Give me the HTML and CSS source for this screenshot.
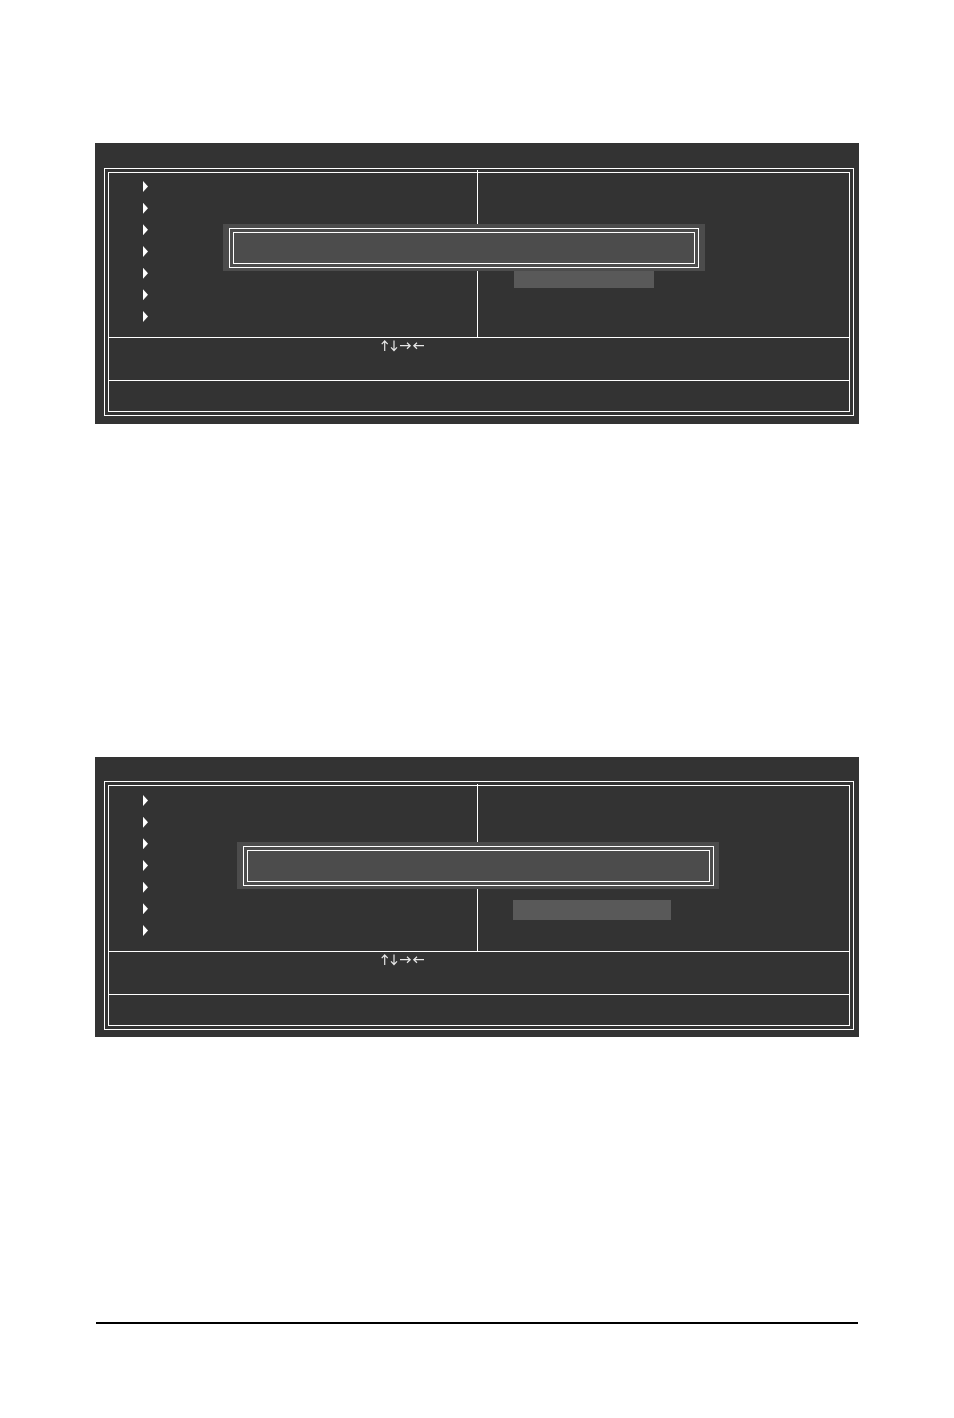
FILE: index.html
```html
<!DOCTYPE html>
<html lang="en">

<head>
    <meta charset="UTF-8">
    <meta name="viewport" content="width=device-width, initial-scale=1.0">
    <title>Setup Utility</title>
    <link rel="stylesheet" href="styles.css">
</head>

<body>
    <main class="page">
        <section class="screen">
            <div class="frame">
                <div class="innerFrame">
                    <div class="menus">
                        <ul class="submenus">
                            <li></li>
                            <li></li>
                            <li></li>
                            <li></li>
                            <li></li>
                            <li></li>
                            <li></li>
                        </ul>
                        <div class="options">
                            <div class="selected"></div>
                        </div>
                    </div>
                    <div class="keys">
                        <svg width="44" height="12" viewBox="0 0 44 12" role="img" aria-label="Arrow keys">
                            <path d="M3.7 11V1M0.7 4.2l3-3.2 3 3.2" />
                            <path d="M13 0.5v10M10 7.3l3 3.2 3-3.2" />
                            <path d="M19 5.7h10M26 2.7l3.2 3-3.2 3" />
                            <path d="M43 5.7H33M36 2.7l-3.2 3 3.2 3" />
                        </svg>
                    </div>
                    <div class="help"></div>
                </div>
            </div>
            <div class="dialog">
                <div class="frame">
                    <div class="innerFrame message"></div>
                </div>
            </div>
        </section>

        <section class="screen save">
            <div class="frame">
                <div class="innerFrame">
                    <div class="menus">
                        <ul class="submenus">
                            <li></li>
                            <li></li>
                            <li></li>
                            <li></li>
                            <li></li>
                            <li></li>
                            <li></li>
                        </ul>
                        <div class="options">
                            <div class="selected"></div>
                        </div>
                    </div>
                    <div class="keys">
                        <svg width="44" height="12" viewBox="0 0 44 12" role="img" aria-label="Arrow keys">
                            <path d="M3.7 11V1M0.7 4.2l3-3.2 3 3.2" />
                            <path d="M13 0.5v10M10 7.3l3 3.2 3-3.2" />
                            <path d="M19 5.7h10M26 2.7l3.2 3-3.2 3" />
                            <path d="M43 5.7H33M36 2.7l-3.2 3 3.2 3" />
                        </svg>
                    </div>
                    <div class="help"></div>
                </div>
            </div>
            <div class="dialog">
                <div class="frame">
                    <div class="innerFrame message"></div>
                </div>
            </div>
        </section>

        <hr class="footer-line">
    </main>
</body>

</html>
```
FILE: styles.css
```css
* {
    box-sizing: border-box;
}

body {
    margin: 0;
    background: #fff;
    font-family: "Liberation Sans", Arial, sans-serif;
}

.page {
    padding: 143px 95px 94px;
}

.screen {
    position: relative;
    padding: 25px 5px 8px 9px;
    background: #333;
    color: #fff;
}

/* double line */
.frame {
    border: 1px solid #fff;
    padding: 3px;
}

.innerFrame {
    border: 1px solid #fff;
}

.menus {
    display: grid;
    grid-template-columns: 92fr 93fr;
    height: 164px;
}

.submenus {
    display: flex;
    flex-direction: column;
    justify-content: space-between;
    margin: 0;
    padding: 8px 0 15px 34px;
    list-style: none;
}

.submenus li {
    width: 5px;
    height: 11px;
    background: #fff;
    clip-path: polygon(0 0, 100% 50%, 0 100%);
}

.options {
    margin-top: -3px;
    padding: 98px 0 0 36px;
    border-left: 1px solid #fff;
}

.selected {
    width: 140px;
    height: 20px;
    background: #595959;
}

.keys {
    height: 43px;
    padding: 2px 0 0 272px;
    border-top: 1px solid #fff;
}

.keys svg {
    display: block;
    fill: none;
    stroke: #e6e6e6;
    stroke-width: 1.2;
}

.help {
    height: 31px;
    border-top: 1px solid #fff;
}

.dialog {
    position: absolute;
    top: 81px;
    left: 128px;
    right: 154px;
    padding: 4px 6px 3px;
    background: #4c4c4c;
}

.message {
    height: 32px;
}

.save {
    margin-top: 333px;
    padding-top: 24px;
    padding-bottom: 7px;
}

.save .menus {
    height: 165px;
}

.save .submenus {
    padding-top: 9px;
}

.save .options {
    margin-top: -2px;
    padding: 116px 0 0 35px;
}

.save .selected {
    width: 158px;
}

.save .dialog {
    top: 85px;
    left: 142px;
    right: 140px;
    padding-right: 5px;
}

.footer-line {
    height: 2px;
    margin: 285px 1px 0;
    border: 0;
    background: #000;
}
```
